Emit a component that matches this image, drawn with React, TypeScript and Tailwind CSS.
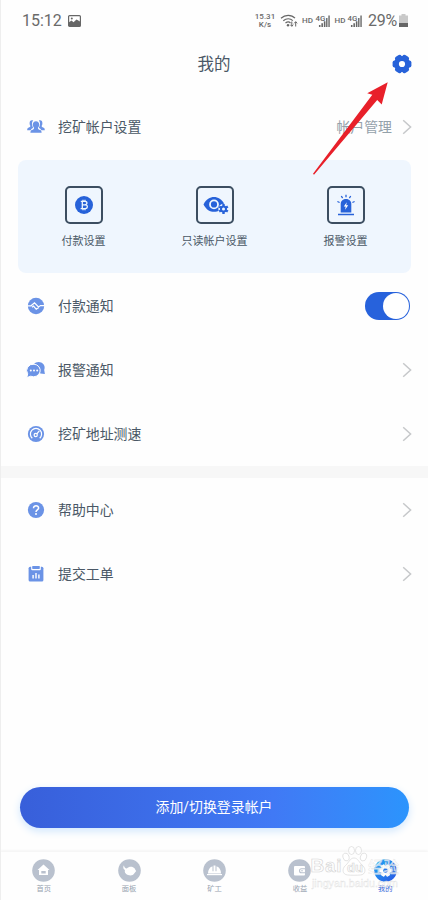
import React from "react";

const ANGLES = [0, 60, 120, 180, 240, 300];

function Gear({ size, color, hole }: { size: number; color: string; hole: string }) {
  return (
    <svg width={size} height={size} viewBox="-10 -10 20 20">
      <circle r="8.1" fill={color} />
      {ANGLES.map((a) => (
        <rect key={a} x="3" y="-3.6" width="6.4" height="7.2" rx="2" fill={color} transform={`rotate(${a})`} />
      ))}
      <circle r="3.1" fill={hole} />
    </svg>
  );
}

function Chevron() {
  return (
    <svg width="10" height="16" viewBox="0 0 10 16" fill="none" stroke="#c6c8ca" strokeWidth="1.5">
      <path d="M1.2 1.2 8.6 8 1.2 14.8" />
    </svg>
  );
}

const BLUE = "#6b93e6";

function PeopleIcon() {
  return (
    <svg width="18" height="16" viewBox="0 0 18 16" fill={BLUE}>
      <path d="M2.600 4.200C2.600 2.200 3.500 1 5.300 1.200l.9.200C5.300 2.300 5 3.300 5 4.700c0 2.500 1.200 3.500 1 4.200-.7.500-2 .9-2.300 2.300H.2c0-1.500.4-2.100 1.200-2.500 1.500-.6 2-.9 1.900-2-.5-.6-.7-1.500-.7-2.500z" />
      <path d="M15.400 4.200c0-2-.9-3.200-2.700-3l-.9.200c.9.900 1.200 1.900 1.200 3.300 0 2.500-1.200 3.500-1 4.200.7.500 2 .9 2.300 2.300h3.500c0-1.500-.4-2.100-1.200-2.500-1.500-.6-2-.9-1.900-2 .5-.6.7-1.500.7-2.500z" />
      <path d="M9 2.200c2 0 3.200 1.300 3.200 3.300 0 1.500-.6 2.600-1.300 3.300 0 1.400.8 1.700 2.200 2.300 1 .4 1.500 1.100 1.500 2.700H3.400c0-1.600.5-2.300 1.500-2.700 1.400-.6 2.200-.9 2.200-2.300-.7-.7-1.300-1.800-1.300-3.300 0-2 1.200-3.300 3.200-3.300z" />
    </svg>
  );
}

function PayNoticeIcon() {
  return (
    <svg width="18" height="18" viewBox="0 0 18 18">
      <circle cx="9" cy="9" r="8.200" fill={BLUE} />
      <path d="M0 8.800h4l3.500-3 4 4.200 2-1.400H18M5 10.300l1.500-1.200 2.700 3 2.600-1.700" fill="none" stroke="#fff" strokeWidth="1.200" />
    </svg>
  );
}

function ChatIcon() {
  return (
    <svg className="-ml-px" width="20" height="18" viewBox="0 0 20 18">
      <path d="M8 3C9.500.9 13 .3 15.800 1.800c2.800 1.600 3.500 4.800 2.400 7.200l.7 4-4.500-.4z" fill={BLUE} />
      <path d="M8 3.200a6.700 6.300 0 1 1-3.300 12L.8 16.600l.9-3.800A6.600 6.300 0 0 1 8 3.200z" fill={BLUE} stroke="#fff" strokeWidth="1" />
      <circle cx="4.800" cy="9.600" r="1" fill="#fff" /><circle cx="8" cy="9.600" r="1" fill="#fff" /><circle cx="11.200" cy="9.600" r="1" fill="#fff" />
    </svg>
  );
}

function SpeedIcon() {
  return (
    <svg width="18" height="18" viewBox="0 0 18 18" fill="none">
      <circle cx="9" cy="9" r="8.100" fill={BLUE} />
      <path d="M5.300 13.200A5.600 5.600 0 1 1 12.700 13.200" stroke="#fff" strokeWidth="1.200" />
      <circle cx="8.700" cy="10" r="1.600" stroke="#fff" strokeWidth="1.200" />
      <path d="m9.800 8.800 2.500-3" stroke="#fff" strokeWidth="1.300" />
    </svg>
  );
}

function HelpIcon() {
  return (
    <svg width="18" height="18" viewBox="0 0 18 18" fill="none">
      <circle cx="9" cy="9" r="8.100" fill={BLUE} />
      <path d="M6.500 7.200c0-3.300 5.200-3.100 5.100-.1C11.600 8.900 9 9 9 10.900" stroke="#fff" strokeWidth="1.500" />
      <circle cx="9" cy="13" r="1" fill="#fff" />
    </svg>
  );
}

function TicketIcon() {
  return (
    <svg width="18" height="18" viewBox="0 0 18 18" fill="none">
      <rect x="1.600" y="1.800" width="14.800" height="14.800" rx="1.500" fill={BLUE} />
      <path d="M4.200 0h9.600v4.200a1 1 0 0 1-1 1H5.200a1 1 0 0 1-1-1z" fill="#fff" />
      <rect x="5.200" y=".9" width="7.600" height="3" rx=".6" fill={BLUE} />
      <path d="M6.100 10v3.600M9 8v5.600M11.900 9.500v4.100" stroke="#fff" strokeWidth="1.400" />
    </svg>
  );
}

function CoinIcon() {
  return (
    <svg width="20" height="20" viewBox="0 0 20 20" fill="none">
      <circle cx="10" cy="10" r="9" fill="#2762d9" />
      <path d="M6.800 6.400h4.100c2.700 0 2.700 3.400 0 3.400H8.300h2.900c3 0 2.700 3.800-.2 3.800H6.600M8.300 6.400v7.200M9 4.800v1.600M11 4.800v1.600M9 13.600v1.600M11 13.600v1.600" stroke="#f0f7fe" strokeWidth="1.300" />
    </svg>
  );
}

function EyeGearIcon() {
  return (
    <svg className="ml-[3px] shrink-0" width="26" height="20" viewBox="0 0 26 20" fill="none">
      <path d="M.5 9.400C3.200 4.200 7 2 11 2s7.800 2.200 10.500 7.400c-2.700 5.200-6.500 7.400-10.500 7.400S3.200 14.600.5 9.400z" fill="#2762d9" />
      <circle cx="11" cy="9.400" r="4" stroke="#f0f7fe" strokeWidth="1.800" />
      <circle cx="20.500" cy="14" r="5.200" fill="#f0f7fe" />
      <g transform="translate(20.500 14)">
        <circle r="3.500" fill="#2762d9" />
        {ANGLES.map((a) => (
          <rect key={a} x="2" y="-1.200" width="3" height="2.400" fill="#2762d9" transform={`rotate(${a + 30})`} />
        ))}
        <circle r="1.500" fill="#f0f7fe" />
      </g>
    </svg>
  );
}

function AlarmIcon() {
  return (
    <svg width="20" height="22" viewBox="0 0 20 22" fill="none">
      <path d="M4.700 18.500V10c0-6.700 10.600-6.700 10.600 0v8.500z" fill="#2762d9" />
      <path d="M2 20.500h16M10 .8v2.500M5.300 2l1.300 2.200M14.700 2l-1.300 2.200M1.400 7.500l2.200 1M18.600 7.500l-2.200 1" stroke="#2762d9" strokeWidth="1.300" />
      <path d="M10.800 8.200 7.800 12.500h1.900l-.6 3.300 3.100-4.500h-2z" fill="#fff" />
    </svg>
  );
}

function StatusBar() {
  return (
    <div className="flex h-10 items-center pl-[22px] pt-px text-[#6a6a6a] font-[Roboto,sans-serif]">
      <span className="w-[46px] text-[16px] leading-none">15:12</span>
      <svg width="13" height="12" viewBox="0 0 13 12">
        <rect x=".6" y=".6" width="11.800" height="10.800" rx="1" fill="#fff" stroke="#666" strokeWidth="1.200" />
        <path d="M1 7.300 3.500 5.600 5.500 7.200 8.500 4.400 12 6.500V11H1z" fill="#666" />
        <circle cx="3.800" cy="3.500" r="1" fill="#666" />
      </svg>
      <div className="ml-[173px] flex w-[22px] flex-col items-center text-[8px] font-medium leading-[8px]">
        <span>15.31</span>
        <span>K/s</span>
      </div>
      <svg className="ml-[4px]" width="18" height="14" viewBox="0 0 18 14" fill="none" stroke="#666" strokeWidth="1.200">
        <path d="M1 4.200c4-3.800 10.500-3.800 14 0M3.300 6.700c3-2.600 7-2.600 9.500 0M5.500 9c1.700-1.300 3.700-1.300 5 0" />
        <circle cx="8" cy="11.300" r="1.200" fill="#666" stroke="none" />
        <path d="M11.800 7.500v4.700m-1.500-1.500 1.500 1.600 1.500-1.600M15.700 12.500V7.800m-1.500 1.500 1.500-1.600 1.500 1.600" strokeWidth="1" />
      </svg>
      <Signal />
      <Signal />
      <span className="ml-[5px] w-[31px] whitespace-nowrap text-[16px] leading-none tracking-[-0.2px]">29%</span>
      <svg width="9" height="14" viewBox="0 0 9 14">
        <path d="M2.500 0h4v1.500H9V13H0V1.500h2.500z" fill="#c9c9c9" />
        <path d="M0 9h9v4H0z" fill="#666" />
      </svg>
    </div>
  );
}

function Signal() {
  return (
    <div className="ml-[4px] flex w-[28.5px] shrink-0 items-center">
      <span className="w-[13px] text-[8px] font-medium leading-none">HD</span>
      <svg width="16" height="14" viewBox="0 0 16 14">
        <text x="0.5" y="6.800" fontSize="8" fontWeight="500" fill="#666" fontFamily="Roboto">4G</text>
        <path d="M4 11h1.600v2H4zM6.500 9.300h1.600V13H6.500zM9 7.300h1.600V13H9zM11.300 4h1.400v9h-1.400zM13.600 1.500H15V13h-1.400z" fill="#666" />
      </svg>
    </div>
  );
}

function Row({ icon, label, children }: { icon: React.ReactNode; label: string; children?: React.ReactNode }) {
  return (
    <div className="flex h-16 items-center pl-[27px] pr-[16px]">
      <div className="flex w-[31px] shrink-0 items-center">{icon}</div>
      <span className="flex-1 text-[13.9px] leading-5">{label}</span>
      {children}
    </div>
  );
}

function Tile({ icon, label }: { icon: React.ReactNode; label: string }) {
  return (
    <div className="flex flex-1 flex-col items-center">
      <div className="flex h-[38px] w-[38px] items-center justify-center rounded-[5px] border-2 border-[#3c4e61]">{icon}</div>
      <span className="mt-[10px] whitespace-nowrap text-[11px] leading-4">{label}</span>
    </div>
  );
}

function NavItem({ label, active, children }: { label: string; active?: boolean; children: React.ReactNode }) {
  return (
    <div className="flex flex-1 flex-col items-center pt-[7px]">
      <svg width="23" height="23" viewBox="0 0 23 23">
        <defs>
          <linearGradient id="activeTab" x1="0" x2="1" y1="0" y2="1">
            <stop offset="0" stopColor="#21abf5" />
            <stop offset="1" stopColor="#2955e4" />
          </linearGradient>
        </defs>
        <circle cx="11.500" cy="11.500" r="11.300" fill={active ? "url(#activeTab)" : "#b9c1ce"} />
        {children}
      </svg>
      <span className={active ? "mt-[2px] text-[7.3px] leading-[9px] text-[#3565d8]" : "mt-[2px] text-[7.3px] leading-[9px] text-[#98a3b0]"}>{label}</span>
    </div>
  );
}

function Watermark() {
  return (
    <svg className="pointer-events-none absolute left-[308px] top-[843px]" width="96" height="50" viewBox="0 0 96 50">
      <g fill="#fff" fillOpacity=".7" stroke="#d4d4d4" strokeWidth=".6" fontFamily="Liberation Sans, Noto Sans CJK SC, sans-serif">
        <text x="2.500" y="29" fontSize="19" fontWeight="bold" textLength="31">Bai</text>
        <path d="M46 15c4 0 5 4.500 8.500 7.500 4 3.500 3 9-2 9.500-3 .3-10 .3-13 0-5-.5-6-6-2-9.500C41 19.500 42 15 46 15z" />
        <ellipse cx="38" cy="14" rx="3" ry="4" transform="rotate(-18 38 14)" />
        <ellipse cx="43.500" cy="7.500" rx="3" ry="4" />
        <ellipse cx="50.500" cy="7.500" rx="3" ry="4" />
        <ellipse cx="55.500" cy="14" rx="3" ry="4" transform="rotate(18 55.500 14)" />
        <text x="39" y="29" fontSize="13" fontWeight="bold">du</text>
        <text x="60" y="30" fontSize="15.500" fontWeight="500" stroke="#dedede" strokeWidth=".3">经验</text>
      </g>
      <text x="4" y="43.500" fontSize="10" fill="#fff" fillOpacity=".6" stroke="#dedede" strokeWidth=".35" fontFamily="Liberation Sans" textLength="86" lengthAdjust="spacingAndGlyphs">jingyan.baidu.com</text>
    </svg>
  );
}

export default function App() {
  return (
    <div className="relative flex h-[900px] w-[428px] flex-col overflow-hidden bg-[#fefefe] text-[#4a5866] font-[Roboto,'Noto_Sans_CJK_SC',sans-serif] shadow-[inset_1px_0_0_#eeeeee]">
      <StatusBar />
      <header className="mb-[7px] grid h-12 grid-cols-[1fr_auto_1fr] items-center pr-4">
        <span />
        <h1 className="pl-4 pt-px text-[16.5px] leading-6">我的</h1>
        <div className="flex justify-end"><Gear size={20} color="#2762d9" hole="#fff" /></div>
      </header>
      <Row icon={<PeopleIcon />} label="挖矿帐户设置">
        <span className="mr-[10px] text-[13.9px] leading-5 text-[#94a1aa]">帐户管理</span>
        <Chevron />
      </Row>
      <section className="mb-px ml-[18px] mr-[17px] mt-px flex h-[113px] rounded-lg bg-[#eff6fe] pt-[26px]">
        <Tile icon={<CoinIcon />} label="付款设置" />
        <Tile icon={<EyeGearIcon />} label="只读帐户设置" />
        <Tile icon={<AlarmIcon />} label="报警设置" />
      </section>
      <Row icon={<PayNoticeIcon />} label="付款通知">
        <div className="mr-[2px] flex h-7 w-[45px] items-center justify-end rounded-full bg-[#2762dc] p-px">
          <div className="h-[26px] w-[26px] rounded-full bg-white" />
        </div>
      </Row>
      <Row icon={<ChatIcon />} label="报警通知"><Chevron /></Row>
      <Row icon={<SpeedIcon />} label="挖矿地址测速"><Chevron /></Row>
      <div className="ml-px h-3 shrink-0 bg-[#f7f7f7]" />
      <Row icon={<HelpIcon />} label="帮助中心"><Chevron /></Row>
      <Row icon={<TicketIcon />} label="提交工单"><Chevron /></Row>
      <div className="flex-1" />
      <button className="mb-6 ml-5 mr-[19px] h-[41px] shrink-0 rounded-full bg-gradient-to-r from-[#385fda] via-[#4079f5] via-65% to-[#2b94fd] pr-px text-[13.9px] text-white shadow-[0_3px_8px_#cfe6fd]">
        添加/切换登录帐户
      </button>
      <nav className="flex h-12 shrink-0 pl-px shadow-[0_-1px_3px_#f0f0f0]">
        <NavItem label="首页">
          <path d="m5.500 11 6-5.500 6 5.500h-1.500v5h-9v-5z" fill="#fff" />
          <path d="M9.300 12h4.400v2.500H9.300z" fill="#b9c1ce" />
        </NavItem>
        <NavItem label="面板">
          <path d="M6 6.200c0 2 1.200 3 2.800 3.300C11 7 15 7.300 16.500 9.300c.8 1 .8 2 1.700 2.700l-1.800 2.200c-1.400 2.500-4 2.600-6.400 1.800C7 15 6.400 12.500 7 11 5.200 10 4.700 8 6 6.200z" fill="#fff" />
        </NavItem>
        <NavItem label="矿工">
          <path d="M5 14.500c0-3.500 1.500-6.500 4.500-7.300v5h1V6.500h2v5.700h1v-5c3 .8 4.500 3.800 4.500 7.300z" fill="#fff" />
          <path d="M4 15h15v1.200H4z" fill="#fff" />
        </NavItem>
        <NavItem label="收益">
          <rect x="6" y="7" width="11" height="9.500" rx="1" fill="#fff" />
          <path d="M17.500 9.800h-4a2 2 0 0 0 0 4h4z" fill="#fff" stroke="#b9c1ce" strokeWidth="1.100" />
          <circle cx="14" cy="11.800" r=".8" fill="#b9c1ce" />
        </NavItem>
        <NavItem label="我的" active>
          <g transform="translate(11.500 11.500)" fill="#fff">
            <circle r="4.800" />
            {ANGLES.map((a) => (
              <rect key={a} x="3" y="-2" width="3.300" height="4" rx="1" transform={`rotate(${a})`} />
            ))}
            <circle r="2.300" fill="#2a76ec" />
          </g>
        </NavItem>
      </nav>
      <svg className="pointer-events-none absolute left-[310px] top-[80px]" width="80" height="96" viewBox="310 80 80 96">
        <path d="M387.700 82.200 367.200 93.300 372.300 94.700 313 173.800 314 174.700 377.200 100 381.700 104.500z" fill="#e8202a" />
      </svg>
      <Watermark />
    </div>
  );
}
